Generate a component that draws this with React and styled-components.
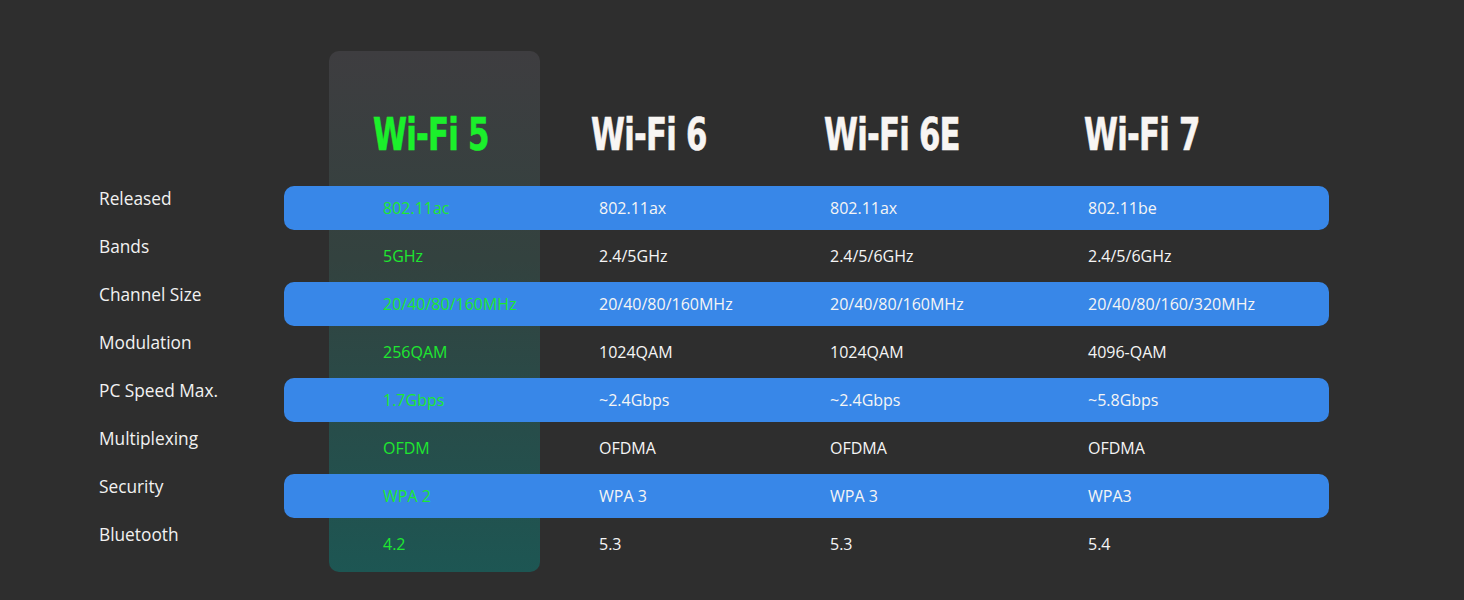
import React from "react";
import styled, { createGlobalStyle } from "styled-components";

const GlobalStyle = createGlobalStyle`
  html, body {
    margin: 0;
    padding: 0;
    background: #2e2e2e;
  }
  body {
    font-family: "Open Sans", "Noto Sans", sans-serif;
  }
`;

const standards = [
  { name: "Wi-Fi 5", highlight: true },
  { name: "Wi-Fi 6" },
  { name: "Wi-Fi 6E" },
  { name: "Wi-Fi 7" },
];

const specs = [
  { label: "Released", values: ["802.11ac", "802.11ax", "802.11ax", "802.11be"] },
  { label: "Bands", values: ["5GHz", "2.4/5GHz", "2.4/5/6GHz", "2.4/5/6GHz"] },
  {
    label: "Channel Size",
    values: ["20/40/80/160MHz", "20/40/80/160MHz", "20/40/80/160MHz", "20/40/80/160/320MHz"],
  },
  { label: "Modulation", values: ["256QAM", "1024QAM", "1024QAM", "4096-QAM"] },
  { label: "PC Speed Max.", values: ["1.7Gbps", "~2.4Gbps", "~2.4Gbps", "~5.8Gbps"] },
  { label: "Multiplexing", values: ["OFDM", "OFDMA", "OFDMA", "OFDMA"] },
  { label: "Security", values: ["WPA 2", "WPA 3", "WPA 3", "WPA3"] },
  { label: "Bluetooth", values: ["4.2", "5.3", "5.3", "5.4"] },
];

export default function App() {
  return (
    <>
      <GlobalStyle />
      <Page>
        <Table>
          {/* highlighted Wi-Fi 5 column, sits behind the rows */}
          <HighlightPanel />

          <HeaderRow>
            {standards.map((s) => (
              <HeaderCell key={s.name} $highlight={s.highlight}>
                {s.name}
              </HeaderCell>
            ))}
          </HeaderRow>

          {specs.map((spec, index) => (
            <React.Fragment key={spec.label}>
              <Label style={{ gridRow: index + 2 }}>{spec.label}</Label>
              <ValueRow style={{ gridRow: index + 2 }} $striped={index % 2 === 0}>
                {spec.values.map((value, col) => (
                  <Value key={col} $highlight={col === 0}>
                    {value}
                  </Value>
                ))}
              </ValueRow>
            </React.Fragment>
          ))}
        </Table>
      </Page>
    </>
  );
}

const Page = styled.div`
  width: 1464px;
  height: 600px;
  box-sizing: border-box;
  padding: 51px 0 0 99px;
  overflow: hidden;
`;

const Table = styled.div`
  display: grid;
  grid-template-columns: 185px 1045px;
  grid-template-rows: 133px repeat(8, 48px) 4px;
`;

const HighlightPanel = styled.div`
  grid-column: 2;
  grid-row: 1 / -1;
  justify-self: start;
  margin-left: 45px;
  width: 211px;
  border-radius: 10px;
  background: linear-gradient(180deg, #3e3d40 0%, #33423f 40%, #1d5653 100%);
  z-index: 0;
`;

const HeaderRow = styled.div`
  grid-column: 2;
  grid-row: 1;
  z-index: 1;
  display: grid;
  grid-template-columns: 218px 233px 260px 1fr;
  padding-left: 89px;
  align-items: center;
  padding-top: 34px;
`;

const HeaderCell = styled.div`
  font-family: "DejaVu Sans Condensed", "Liberation Sans", sans-serif;
  font-weight: 700;
  font-size: 45px;
  letter-spacing: -1px;
  white-space: nowrap;
  transform: scaleX(0.76);
  transform-origin: left center;
  -webkit-text-stroke: 0.6px currentColor;
  color: ${(p) => (p.$highlight ? "#1bf02b" : "#f8f5f3")};
`;

const Label = styled.div`
  grid-column: 1;
  align-self: start;
  padding-top: 3px;
  font-size: 17.3px;
  line-height: 24px;
  color: #f2f2f2;
`;

const ValueRow = styled.div`
  grid-column: 2;
  z-index: 1;
  display: grid;
  grid-template-columns: 216px 231px 258px 1fr;
  align-items: center;
  padding-left: 99px;
  margin: 2px 0;
  border-radius: 10px;
  background: ${(p) => (p.$striped ? "#3887e8" : "transparent")};
`;

const Value = styled.div`
  font-size: 16px;
  line-height: 20px;
  color: ${(p) => (p.$highlight ? "#1ee830" : "#f5f5f5")};
`;
